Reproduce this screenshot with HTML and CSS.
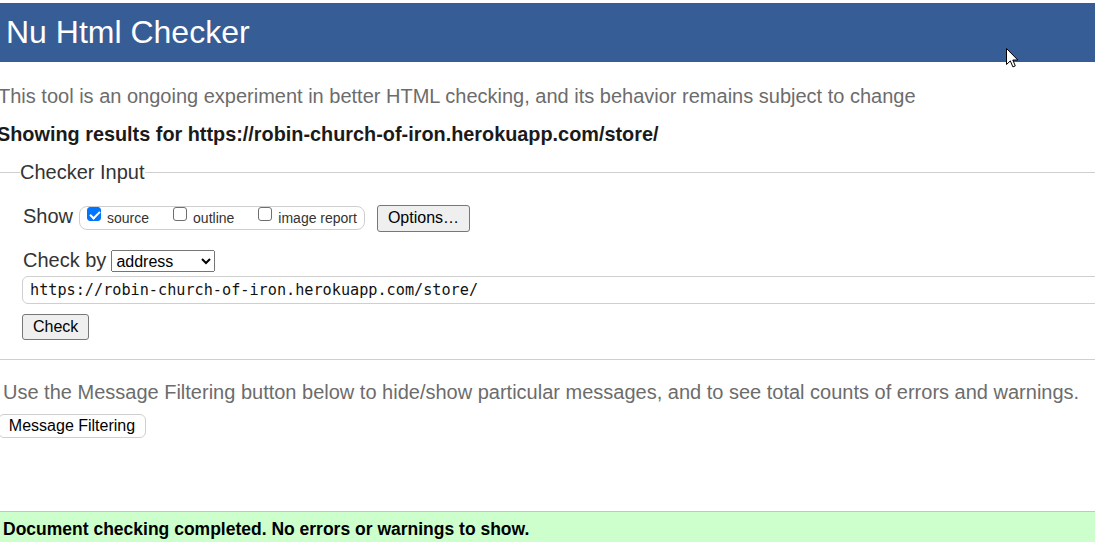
FILE: index.html
```html
<!DOCTYPE html>
<html lang="en">
<head>
<meta charset="utf-8">
<title>Showing results for https://robin-church-of-iron.herokuapp.com/store/ - Nu Html Checker</title>
<link rel="stylesheet" href="styles.css">
</head>
<body>
<h1 class="title">Nu Html Checker</h1>
<p class="intro">This tool is an ongoing experiment in better HTML checking, and its behavior remains subject to change</p>
<p class="results-for">Showing results for https://robin-church-of-iron.herokuapp.com/store/</p>
<form class="checker">
  <div class="legend-row"><span class="legend">Checker Input</span></div>
  <div class="row show-row">
    <span class="row-label">Show</span>
    <div class="opts">
      <label class="opt"><input type="checkbox" checked><span>source</span></label>
      <label class="opt"><input type="checkbox"><span>outline</span></label>
      <label class="opt"><input type="checkbox"><span>image report</span></label>
    </div>
    <button type="button" class="btn options">Options…</button>
  </div>
  <div class="row by-row">
    <span class="row-label">Check by</span>
    <select class="by"><option>address</option><option>file upload</option><option>text input</option></select>
  </div>
  <input class="url" type="url" value="https://robin-church-of-iron.herokuapp.com/store/">
  <button type="button" class="btn check">Check</button>
</form>
<p class="filter-note">Use the Message Filtering button below to hide/show particular messages, and to see total counts of errors and warnings.</p>
<button type="button" class="filter-btn">Message Filtering</button>
<div class="success">Document checking completed. No errors or warnings to show.</div>
<svg class="cursor" width="13" height="21" viewBox="0 0 13 21" aria-hidden="true">
  <path d="M0.5 0.5 L0.5 16.5 L4.3 12.9 L6.9 18.9 L9.3 17.9 L6.8 12 L11.8 12 Z" fill="#fff" stroke="#000" stroke-width="1" stroke-linejoin="miter"/>
</svg>
</body>
</html>
```
FILE: styles.css
```css
html, body {
  overflow: hidden;
}
body {
  margin: 0;
  padding-top: 3px;
  font-family: "Liberation Sans", Arial, sans-serif;
  color: #222;
  background: #fff;
}
.title {
  margin: 0;
  height: 59px;
  line-height: 59px;
  padding: 0 6px;
  font-size: 32px;
  font-weight: normal;
  color: #fff;
  background: #365d95;
}
.intro {
  margin: 22px 0 0 -2px;
  font-size: 20px;
  line-height: 24px;
  color: #6c6c6c;
  white-space: nowrap;
}
.results-for {
  margin: 14px 0 0 -3px;
  font-size: 19.85px;
  line-height: 24px;
  font-weight: bold;
  color: #1a1a1a;
  white-space: nowrap;
}
.checker {
  margin: 14px 0 0;
  padding: 0 0 19px 22px;
  border-bottom: 1px solid #cfcfcf;
}
.legend-row {
  display: flex;
  align-items: center;
  height: 24px;
  margin-left: -22px;
}
.legend-row::before,
.legend-row::after {
  content: "";
  border-top: 1px solid #cfcfcf;
}
.legend-row::before {
  width: 20px;
}
.legend-row::after {
  flex: 1;
}
.legend {
  font-size: 20px;
  line-height: 24px;
  color: #333;
}
.row {
  display: flex;
  align-items: baseline;
  padding-left: 1px;
}
.show-row {
  margin-top: 20px;
}
.by-row {
  margin-top: 16px;
}
.row-label {
  font-size: 20px;
  line-height: 24px;
  color: #333;
}
.opts {
  display: flex;
  align-items: baseline;
  box-sizing: border-box;
  height: 24px;
  margin-left: 6px;
  padding: 0 7px 0 7px;
  border: 1px solid #cfcfcf;
  border-radius: 8px;
}
.opt {
  display: flex;
  align-items: flex-start;
  margin-right: 24px;
  font-size: 14px;
  line-height: 16px;
  color: #333;
}
.opt:last-child {
  margin-right: 0;
}
.opt input {
  appearance: none;
  -webkit-appearance: none;
  position: relative;
  box-sizing: border-box;
  width: 14px;
  height: 14px;
  margin: 0;
  border: 1px solid #6f6f6f;
  border-radius: 3px;
  background: #fff;
}
.opt input:checked {
  background: #0075ff;
  border-color: #0075ff;
}
.opt input:checked::after {
  content: "";
  position: absolute;
  left: 3.5px;
  top: 0.5px;
  width: 4px;
  height: 8px;
  border: solid #fff;
  border-width: 0 2px 2px 0;
  transform: rotate(45deg);
}
.opt span {
  align-self: baseline;
  margin: 3px 0 0 6px;
}
.btn {
  box-sizing: border-box;
  padding: 0 10px;
  font-family: "Liberation Sans", Arial, sans-serif;
  font-size: 16px;
  color: #000;
  background: #efefef;
  border: 1px solid #777;
  border-radius: 3px;
}
.options {
  height: 27px;
  margin-left: 12px;
}
.by {
  box-sizing: border-box;
  width: 104px;
  height: 22px;
  margin-left: 5px;
  font-family: "Liberation Sans", Arial, sans-serif;
  font-size: 16px;
  color: #000;
}
.url {
  display: block;
  box-sizing: border-box;
  width: 1100px;
  height: 28px;
  margin-top: 4px;
  padding: 0 7px;
  border: 1px solid #cfcfcf;
  border-radius: 6px;
  font-family: "DejaVu Sans Mono", "Liberation Mono", monospace;
  font-size: 15.2px;
  color: #111;
  background: #fff;
}
.check {
  display: block;
  height: 26px;
  margin-top: 10px;
}
.filter-note {
  margin: 20px 0 0;
  padding-left: 3px;
  font-size: 20px;
  line-height: 24px;
  color: #6c6c6c;
  white-space: nowrap;
}
.filter-btn {
  display: block;
  box-sizing: border-box;
  width: 148px;
  height: 24px;
  margin: 10px 0 0 -2px;
  padding: 0;
  font-family: "Liberation Sans", Arial, sans-serif;
  font-size: 16px;
  color: #000;
  background: #fff;
  border: 1px solid #cfcfcf;
  border-radius: 6px;
}
.success {
  margin-top: 73px;
  padding: 7px 3px 20px;
  border-top: 1px solid #c4c4c4;
  background: #ccffcc;
  font-size: 17.5px;
  line-height: 20px;
  font-weight: bold;
  color: #000;
}
.cursor {
  position: absolute;
  left: 1006px;
  top: 48px;
}
```
